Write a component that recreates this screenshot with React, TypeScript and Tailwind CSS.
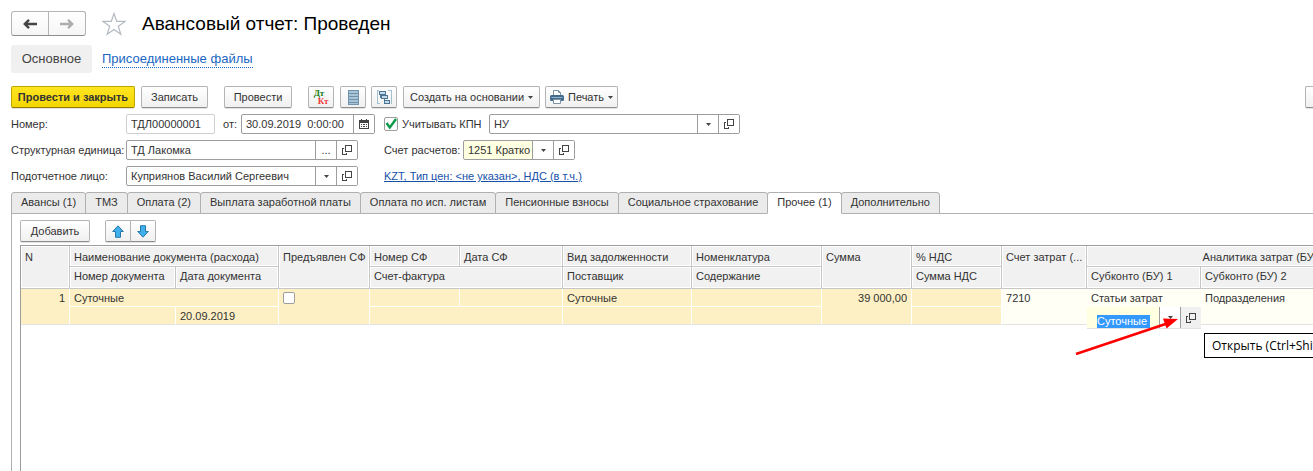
import React from "react";
import clsx from "clsx";

const TABS = [
  "Авансы (1)",
  "ТМЗ",
  "Оплата (2)",
  "Выплата заработной платы",
  "Оплата по исп. листам",
  "Пенсионные взносы",
  "Социальное страхование",
  "Прочее (1)",
  "Дополнительно",
];

const COLUMN_WIDTHS = [49, 106, 103, 91, 90, 103, 129, 130, 90, 90, 85, 114, 114, 115];

const OpenIcon = () => (
  <svg className="h-[10px] w-[10px]" viewBox="0 0 10 10" fill="none" stroke="#444" shapeRendering="crispEdges">
    <path d="M3.5 0.5h6v6h-6z" />
    <path d="M2 3.5H0.5v6h4V8" />
  </svg>
);

const Caret = () => (
  <svg className="h-[3px] w-[5px] shrink-0" viewBox="0 0 5 3" fill="#444">
    <path d="M0 0h5L2.5 3z" />
  </svg>
);

const CalendarIcon = () => (
  <svg className="h-[10px] w-[10px]" viewBox="0 0 10 10" shapeRendering="crispEdges">
    <path d="M0 1h10v9H0z" fill="#444" />
    <path d="M2 0h1v2H2zM7 0h1v2H7z" fill="#444" />
    <path d="M1 4h8v5H1z" fill="#fff" />
    <path d="M2 5h1v1H2zM4 5h2v1H4zM7 5h1v1H7zM2 7h1v1H2zM4 7h2v1H4zM7 7h1v1H7z" fill="#444" />
  </svg>
);

const RegisterIcon = () => (
  <svg className="h-[15px] w-[11px]" viewBox="0 0 11 15" shapeRendering="crispEdges">
    <path d="M0 0h11v15H0z" fill="#6f93ad" />
    <path d="M1 1h9v2H1zM1 4h9v2H1zM1 7h9v2H1zM1 10h9v2H1zM1 13h9v1H1z" fill="#a9c4d6" />
  </svg>
);

const StructureIcon = () => (
  <svg className="h-[15px] w-[15px]" viewBox="0 0 15 15" fill="none" shapeRendering="crispEdges">
    <path d="M2 0.5H0.5v13H3M11 0.5h3.5v13H14" stroke="#a3bfd2" />
    <path d="M3.5 4v3.5h2M7.5 8v3.5h2" stroke="#4c7593" />
    <path d="M2.5 1.5h6v3h-6zM4.5 5.5h6v3h-6zM7.5 10.5h5v3h-5z" fill="#c3dbea" stroke="#4c7593" />
  </svg>
);

const PrinterIcon = () => (
  <svg className="h-[14px] w-[14px]" viewBox="0 0 14 14" fill="none">
    <path d="M3.5 6V0.5h5l2 2V6" fill="#fff" stroke="#7c93a6" />
    <path d="M8.5 0.5v2h2" stroke="#7c93a6" />
    <rect x="0" y="5" width="14" height="6" rx="1.5" fill="#44698a" />
    <path d="M1.5 7.5h11" stroke="#8fb4d0" />
    <path d="M3.5 9.5h7v4h-7z" fill="#fff" stroke="#7c93a6" />
  </svg>
);

const BlueArrow = ({ down }: { down?: boolean }) => (
  <svg className={clsx("h-[13px] w-[12px]", down && "rotate-180")} viewBox="0 0 12 13">
    <path d="M6 0.8L11.3 6.5H8.5v5.8h-5V6.5H0.7z" fill="#3fb0ec" stroke="#2a78a8" strokeLinejoin="round" />
  </svg>
);

const NavArrow = ({ forward }: { forward?: boolean }) => (
  <svg
    className={clsx("h-[10px] w-[14px]", forward ? "rotate-180 text-[#adadad]" : "text-[#444]")}
    viewBox="0 0 14 10"
    fill="none"
    stroke="currentColor"
    strokeWidth={2.4}
  >
    <path d="M1.5 5H14M6 0.9L1.8 5L6 9.1" />
  </svg>
);

interface ButtonProps {
  children?: React.ReactNode;
  className?: string;
  label?: string;
  primary?: boolean;
}

const Button = ({ children, className, label, primary }: ButtonProps) => (
  <button
    type="button"
    aria-label={label}
    className={clsx(
      "flex h-[22px] shrink-0 items-center justify-center border bg-linear-to-b whitespace-nowrap shadow-[0_1px_0_#e2e2e2]",
      primary
        ? "border-[#c2a600] border-b-[#947d00] from-[#ffe51f] to-[#f3d600] font-bold"
        : "border-[#b4b4b4] border-b-[#8e8e8e] from-white to-[#f0f0f0]",
      className
    )}
  >
    {children}
  </button>
);

interface FieldProps {
  id: string;
  value: string;
  className: string;
  label?: string;
  yellow?: boolean;
  muted?: boolean;
  children?: React.ReactNode;
}

// Text box with optional buttons attached on the right
const Field = ({ id, value, className, label, yellow, muted, children }: FieldProps) => (
  <div
    className={clsx(
      "flex h-5 shrink-0 overflow-hidden rounded-[2px] border",
      muted ? "border-[#cfcfcf]" : "border-[#9d9d9d]",
      yellow ? "bg-[#ffffe1]" : "bg-white",
      className
    )}
  >
    <input id={id} aria-label={label} defaultValue={value} className="w-0 min-w-0 flex-1 pl-1 outline-none" />
    {children}
  </div>
);

const FieldButton = ({ children, label }: { children: React.ReactNode; label: string }) => (
  <button
    type="button"
    aria-label={label}
    className="flex w-[21px] shrink-0 items-center justify-center border-l border-[#9d9d9d] bg-white"
  >
    {children}
  </button>
);

interface HeadProps {
  children?: React.ReactNode;
  colSpan?: number;
  rowSpan?: number;
  center?: boolean;
  lower?: boolean;
}

const Head = ({ children, colSpan, rowSpan, center, lower }: HeadProps) => (
  <th
    colSpan={colSpan}
    rowSpan={rowSpan}
    className={clsx(
      "border-r border-b border-[#c6c6c6] bg-[#f1f1f1] pl-1 align-top font-normal whitespace-nowrap shadow-[inset_0_0_0_1px_#fff]",
      lower ? "pt-px" : "pt-[3px]",
      center ? "text-center" : "text-left"
    )}
  >
    {children}
  </th>
);

interface CellProps {
  children?: React.ReactNode;
  colSpan?: number;
  rowSpan?: number;
  right?: boolean;
  last?: boolean;
  light?: boolean;
}

const Cell = ({ children, colSpan, rowSpan, right, last, light }: CellProps) => (
  <td
    colSpan={colSpan}
    rowSpan={rowSpan}
    className={clsx(
      "border-r border-b px-1 pt-px align-top whitespace-nowrap",
      light ? "border-r-[#fffff5] bg-[#fffff5]" : "border-r-white bg-[#fdf0c5]",
      last ? "border-b-[#e2e2e2]" : light ? "border-b-[#fffff5]" : "border-b-white",
      right && "text-right"
    )}
  >
    {children}
  </td>
);

export default function App() {
  return (
    <div className="flex min-h-screen flex-col overflow-hidden bg-white pt-[11px] pl-[11px] font-['Liberation_Sans',Arial,sans-serif] text-[11px] leading-4 text-[#333]">
      {/* Title */}
      <header className="flex h-[25px] items-center">
        <div className="flex h-[25px] w-[75px] rounded-[3px] border border-[#b4b4b4] border-b-[#8e8e8e] bg-linear-to-b from-white to-[#f6f6f6]">
          <button type="button" aria-label="Назад" className="flex flex-1 items-center justify-center border-r border-[#b4b4b4]">
            <NavArrow />
          </button>
          <button type="button" aria-label="Вперед" className="flex flex-1 items-center justify-center">
            <NavArrow forward />
          </button>
        </div>
        <button type="button" aria-label="Избранное" className="ml-4">
          <svg className="h-6 w-6" viewBox="0 0 24 24" fill="#fff" stroke="#b3bac2" strokeWidth={1.2}>
            <path d="M12 1.5l2.7 7.9h8.3l-6.7 4.9 2.5 8-6.8-4.9-6.8 4.9 2.5-8L1 9.4h8.3z" />
          </svg>
        </button>
        <h1 className="ml-4 text-[19px] leading-6 text-black">Авансовый отчет: Проведен</h1>
      </header>

      <nav className="mt-[9px] flex h-7 items-center text-[13px]">
        <a href="#main" className="flex h-7 w-[81px] items-center justify-center rounded-[3px] bg-[#f0f0f0] text-[#444]">
          Основное
        </a>
        <a href="#files" className="ml-[10px] border-b border-dotted border-[#1a66c2] text-[#1a66c2]">
          Присоединенные файлы
        </a>
      </nav>

      {/* Commands */}
      <div className="mt-[13px] flex items-center">
        <Button primary className="w-[124px] rounded-[2px]">Провести и закрыть</Button>
        <Button className="ml-[6px] w-[67px] rounded-[2px]">Записать</Button>
        <Button className="ml-4 w-[68px] rounded-[2px]">Провести</Button>
        <Button label="Дт Кт" className="ml-4 w-[26px] rounded-[2px]">
          <span className="flex flex-col font-['Liberation_Serif',serif] text-[9px] leading-[8px] font-bold">
            <span className="pr-1 text-[#1d7d12]">Дт</span>
            <span className="pl-1 text-[#ef3b3b]">Кт</span>
          </span>
        </Button>
        <Button label="Движения документа" className="ml-[6px] w-[26px] rounded-[2px]">
          <RegisterIcon />
        </Button>
        <Button label="Структура подчиненности" className="ml-[5px] w-[26px] rounded-[2px]">
          <StructureIcon />
        </Button>
        <Button className="ml-[6px] w-[137px] gap-1 rounded-[2px]">
          Создать на основании <Caret />
        </Button>
        <Button className="ml-[5px] w-[73px] gap-1 rounded-[2px]">
          <PrinterIcon /> Печать <Caret />
        </Button>
        <Button label="Еще" className="ml-auto w-2 rounded-l-[2px] border-r-0" />
      </div>

      {/* Document attributes */}
      <div className="mt-[6px] flex flex-col gap-[6px]">
        <div className="flex items-center">
          <label htmlFor="number" className="w-[115px] shrink-0">Номер:</label>
          <Field id="number" value="ТДЛ00000001" muted className="w-[89px]" />
          <label htmlFor="date" className="ml-2 w-[18px] shrink-0">от:</label>
          <Field id="date" value="30.09.2019  0:00:00" className="w-[134px]">
            <FieldButton label="Календарь"><CalendarIcon /></FieldButton>
          </Field>
          <span className="relative ml-[9px] flex h-[14px] w-[14px] shrink-0">
            <input
              id="kpn"
              type="checkbox"
              defaultChecked
              className="peer h-[14px] w-[14px] appearance-none rounded-[2px] border border-[#9d9d9d] bg-white"
            />
            <svg
              className="pointer-events-none absolute inset-0 hidden h-[14px] w-[14px] peer-checked:block"
              viewBox="0 0 14 14"
              fill="none"
              stroke="#0c9a49"
              strokeWidth={2.4}
            >
              <path d="M2.5 6l3.3 4.5L12 2" />
            </svg>
          </span>
          <label htmlFor="kpn" className="ml-1 w-[87px] shrink-0">Учитывать КПН</label>
          <Field id="accounting" label="Вид учета" value="НУ" className="w-[251px]">
            <FieldButton label="Выбрать"><Caret /></FieldButton>
            <FieldButton label="Открыть"><OpenIcon /></FieldButton>
          </Field>
        </div>
        <div className="flex items-center">
          <label htmlFor="unit" className="w-[115px] shrink-0">Структурная единица:</label>
          <Field id="unit" value="ТД Лакомка" className="w-[232px]">
            <FieldButton label="Выбрать">...</FieldButton>
            <FieldButton label="Открыть"><OpenIcon /></FieldButton>
          </Field>
          <label htmlFor="account" className="ml-[26px] w-[79px] shrink-0">Счет расчетов:</label>
          <Field id="account" value="1251 Кратко" yellow className="w-[112px]">
            <FieldButton label="Выбрать"><Caret /></FieldButton>
            <FieldButton label="Открыть"><OpenIcon /></FieldButton>
          </Field>
        </div>
        <div className="flex items-center">
          <label htmlFor="person" className="w-[115px] shrink-0">Подотчетное лицо:</label>
          <Field id="person" value="Куприянов Василий Сергеевич" className="w-[232px]">
            <FieldButton label="Выбрать"><Caret /></FieldButton>
            <FieldButton label="Открыть"><OpenIcon /></FieldButton>
          </Field>
          <a href="#prices" className="ml-[26px] text-[#1551a8] underline">
            KZT, Тип цен: &lt;не указан&gt;, НДС (в т.ч.)
          </a>
        </div>
      </div>

      {/* Tabs */}
      <div role="tablist" className="mt-[6px] flex h-[22px] shrink-0">
        {TABS.map((tab) => {
          const active = tab === "Прочее (1)";
          return (
            <button
              key={tab}
              type="button"
              role="tab"
              aria-selected={active}
              className={clsx(
                "-mr-px shrink-0 rounded-t-[3px] border border-[#b0b0b0] px-[9px] pb-[2px] whitespace-nowrap",
                active ? "z-10 border-b-white bg-white" : "bg-[#ebebeb]"
              )}
            >
              {tab}
            </button>
          );
        })}
      </div>

      <section className="-mt-px flex flex-1 flex-col border-t border-l border-[#b0b0b0] pt-[6px] pl-2">
        <div className="flex">
          <Button className="w-[70px] rounded-[2px]">Добавить</Button>
          <Button label="Вверх" className="ml-[15px] w-[26px] rounded-l-[2px]">
            <BlueArrow />
          </Button>
          <Button label="Вниз" className="-ml-px w-[26px] rounded-r-[2px]">
            <BlueArrow down />
          </Button>
        </div>

        <div className="mt-[3px] flex-1 overflow-hidden border-t border-l border-[#9d9d9d]">
          <table className="w-[1409px] table-fixed border-separate border-spacing-0">
            <colgroup>
              {COLUMN_WIDTHS.map((width, i) => (
                <col key={i} style={{ width }} />
              ))}
            </colgroup>
            <thead>
              <tr className="h-[21px]">
                <Head rowSpan={2}>N</Head>
                <Head colSpan={2}>Наименование документа (расхода)</Head>
                <Head rowSpan={2}>Предъявлен СФ</Head>
                <Head>Номер СФ</Head>
                <Head>Дата СФ</Head>
                <Head>Вид задолженности</Head>
                <Head>Номенклатура</Head>
                <Head rowSpan={2}>Сумма</Head>
                <Head>% НДС</Head>
                <Head rowSpan={2}>Счет затрат (...</Head>
                <Head colSpan={3} center>Аналитика затрат (БУ)</Head>
              </tr>
              <tr className="h-[22px]">
                <Head lower>Номер документа</Head>
                <Head lower>Дата документа</Head>
                <Head lower colSpan={2}>Счет-фактура</Head>
                <Head lower>Поставщик</Head>
                <Head lower>Содержание</Head>
                <Head lower>Сумма НДС</Head>
                <Head lower>Субконто (БУ) 1</Head>
                <Head lower>Субконто (БУ) 2</Head>
                <Head lower />
              </tr>
            </thead>
            <tbody>
              <tr className="h-[18px]">
                <Cell rowSpan={2} right last>1</Cell>
                <Cell colSpan={2}>Суточные</Cell>
                <Cell rowSpan={2} last>
                  <input
                    type="checkbox"
                    aria-label="Предъявлен СФ"
                    className="mt-[2px] block h-3 w-3 appearance-none rounded-[2px] border border-[#9d9d9d] bg-white"
                  />
                </Cell>
                <Cell />
                <Cell />
                <Cell>Суточные</Cell>
                <Cell />
                <Cell rowSpan={2} right last>39 000,00</Cell>
                <Cell />
                <Cell rowSpan={2} light last>7210</Cell>
                <Cell light>Статьи затрат</Cell>
                <Cell light>Подразделения</Cell>
                <Cell light />
              </tr>
              <tr className="h-[18px]">
                <Cell last />
                <Cell last>20.09.2019</Cell>
                <Cell colSpan={2} last />
                <Cell last />
                <Cell last />
                <Cell last />
                <td className="relative bg-[#fffff5]">
                  {/* Open cell editor hangs over the row's lower edge */}
                  <div className="absolute top-0 left-0 flex h-[22px] w-[114px] border-b border-[#e2e2e2] bg-[#ffffe1]">
                    <div className="flex flex-1 items-end pl-[10px]">
                      <input
                        aria-label="Субконто (БУ) 1"
                        defaultValue="Суточные"
                        className="h-[13px] w-[53px] bg-[#3399ff] leading-[13px] text-white outline-none"
                      />
                    </div>
                    <FieldButton label="Выбрать"><Caret /></FieldButton>
                    <button
                      type="button"
                      aria-label="Открыть"
                      className="flex w-[21px] items-center justify-center border-l border-[#9d9d9d] bg-[#f0f0f0]"
                    >
                      <OpenIcon />
                    </button>
                  </div>
                  <svg className="pointer-events-none absolute top-2 -left-3 h-10 w-[106px]" viewBox="0 0 106 40">
                    <path d="M1 39L92 8.5" stroke="#f00" strokeWidth={2.6} />
                    <path d="M103 4L91.5 13.5L88 3.5z" fill="#f00" />
                  </svg>
                  <div
                    role="tooltip"
                    className="absolute top-[26px] left-[117px] flex h-[25px] items-center border border-black bg-white px-[7px] font-['Open_Sans','Noto_Sans',sans-serif] text-[12px] whitespace-nowrap text-black"
                  >
                    Открыть (Ctrl+Shift+F4)
                  </div>
                </td>
                <Cell light last />
                <Cell light last />
              </tr>
            </tbody>
          </table>
        </div>
      </section>
    </div>
  );
}
